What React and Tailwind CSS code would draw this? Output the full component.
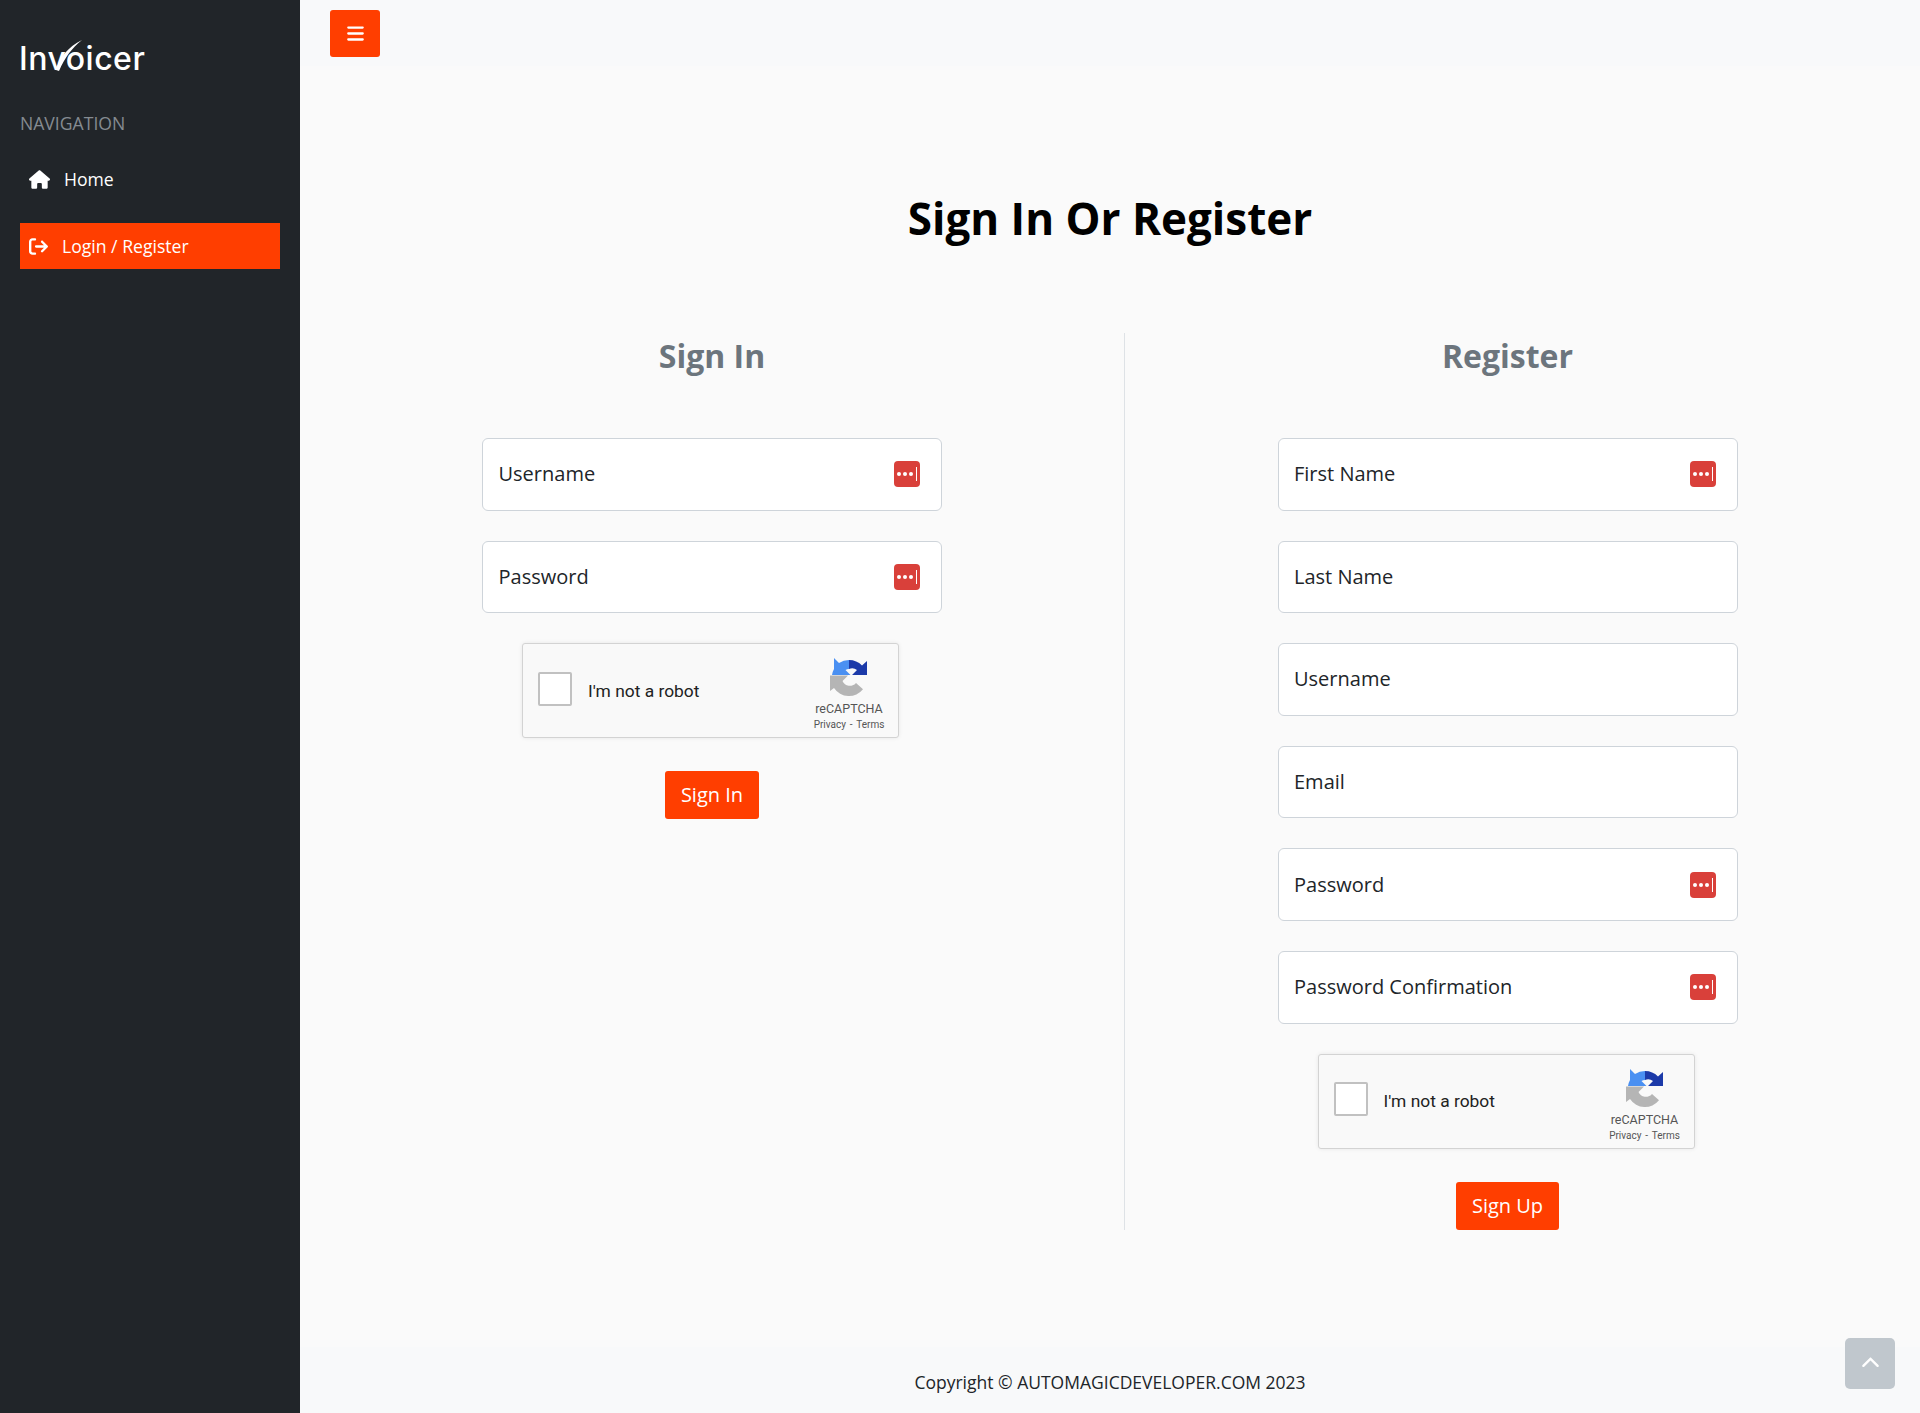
import { FaHouse, FaArrowRightFromBracket, FaBars, FaChevronUp } from "react-icons/fa6";

const openSans = { fontFamily: '"Open Sans", sans-serif' };

const PasswordBadge = () => (
  <span className="flex h-[26px] w-[26px] items-center justify-center gap-[2px] rounded-[4px] bg-[#d9403a]">
    <span className="h-[4px] w-[4px] rounded-full bg-white"></span>
    <span className="h-[4px] w-[4px] rounded-full bg-white"></span>
    <span className="h-[4px] w-[4px] rounded-full bg-white"></span>
    <span className="ml-[1px] h-[14px] w-[1px] bg-white"></span>
  </span>
);

const Field = ({ label, badge }) => (
  <div className="mb-[30px] flex h-[72.6px] w-[460px] items-center justify-between rounded-[6px] border border-[#ced4da] bg-white pl-[15.5px] pr-[21px] text-[20px] text-[#212529]">
    <span>{label}</span>
    {badge && <PasswordBadge />}
  </div>
);

const CaptchaLogo = () => (
  <svg width="38" height="40" viewBox="0 0 38 40">
    <path d="M19 3 A18 18 0 0 1 32 8.5 L37 4 L37 18 L22 18 L27 13 A8 8 0 0 0 19 12 Z" fill="#1c3aa9" />
    <path d="M4 1 L9 6 A18 18 0 0 1 19 3 L19 12 A8 8 0 0 0 15.5 13 L20.5 18 L2 18 A18 18 0 0 1 4 12 Z" fill="#4a90f2" />
    <path d="M0 18.5 L18 18.5 L12.5 24 A8 8 0 0 0 26 26 L33 32.3 A18 18 0 0 1 4 31 L0 34 Z" fill="#b5b5b5" />
  </svg>
);

const Captcha = () => (
  <div
    className="-ml-[3px] flex h-[95px] w-[377px] items-center rounded-[3px] border border-[#d3d3d3] bg-[#f9f9f9] pl-[15px] pr-[13px] shadow-[0_0_4px_rgba(0,0,0,0.08)]"
    style={{ fontFamily: "Roboto, sans-serif" }}
  >
    <span className="mb-[4px] h-[34px] w-[34px] rounded-[2px] border-2 border-[#c1c1c1] bg-white"></span>
    <span className="ml-[16px] flex-1 text-[17.4px] text-[#222]">I'm not a robot</span>
    <div className="flex w-[72px] flex-col items-center self-start pt-[13px]">
      <CaptchaLogo />
      <span className="mt-[4px] text-[12.5px] leading-[16px] text-[#555]">reCAPTCHA</span>
      <span className="whitespace-nowrap text-[10px] leading-[15px] text-[#555] [word-spacing:1.4px]">Privacy - Terms</span>
    </div>
  </div>
);

const SubmitButton = ({ children }) => (
  <button className="mt-[33px] h-[48px] rounded-[3px] bg-[#ff3e00] px-[16px] text-[20px] text-white">
    {children}
  </button>
);

const App = () => {
  return (
    <div className="flex min-h-[1413px] bg-[#fafafa]" style={openSans}>
      <aside className="w-[300px] shrink-0 bg-[#212529] px-[20px] text-white">
        <div className="relative -ml-px mt-[37px] h-[40px] text-[32px] font-medium leading-[44px] tracking-[0.5px]" style={{ fontFamily: "Inter, sans-serif" }}>
          Invoicer
          {/* swoosh off the v in the logo */}
          <svg className="absolute left-0 top-0" width="70" height="40" viewBox="0 0 70 40">
            <path d="M37 33 C41 20 49 10 63 3 C53 11 46 20 40 34 Z" fill="#fff" />
          </svg>
        </div>
        <div className="mt-[34px] text-[17.6px] leading-[24px] text-[#858b91]">NAVIGATION</div>
        <a className="mt-[21px] flex h-[46px] items-center pl-[9px] text-[17.6px]">
          <FaHouse className="mr-[14px] text-[21px]" />
          Home
        </a>
        <a className="mt-[21px] flex h-[46px] items-center bg-[#ff3e00] pl-[9px] text-[17.6px]">
          <FaArrowRightFromBracket className="mr-[14px] text-[19px]" />
          Login / Register
        </a>
      </aside>
      <main className="flex min-w-0 flex-1 flex-col">
        <div className="h-[66px] bg-[#f8f9fa] pl-[30px] pt-[10px]">
          <button className="flex h-[47px] w-[50px] items-center justify-center rounded-[3px] bg-[#ff3e00] text-[19px] text-white">
            <FaBars />
          </button>
        </div>
        <h1 className="mt-[118px] text-center text-[44px] font-bold leading-[68px] text-black">Sign In Or Register</h1>
        <div className="mt-[81px] flex">
          <section className="flex w-[825px] flex-col items-center border-r border-[#dee2e6]">
            <h2 className="mb-[59px] text-[32px] font-bold leading-[46px] text-[#6c757d]">Sign In</h2>
            <Field label="Username" badge />
            <Field label="Password" badge />
            <Captcha />
            <SubmitButton>Sign In</SubmitButton>
          </section>
          <section className="flex w-[765px] flex-col items-center">
            <h2 className="mb-[59px] text-[32px] font-bold leading-[46px] text-[#6c757d]">Register</h2>
            <Field label="First Name" badge />
            <Field label="Last Name" />
            <Field label="Username" />
            <Field label="Email" />
            <Field label="Password" badge />
            <Field label="Password Confirmation" badge />
            <Captcha />
            <SubmitButton>Sign Up</SubmitButton>
          </section>
        </div>
        <footer className="mt-auto flex h-[66px] items-center justify-center bg-[#f8f9fa] pt-[4px] text-[17.5px] text-[#212529]">
          Copyright © AUTOMAGICDEVELOPER.COM 2023
        </footer>
      </main>
      <button className="fixed bottom-[24px] right-[25px] flex h-[51px] w-[50px] items-center justify-center rounded-[5px] bg-[#c0c7cd] text-[19px] text-white">
        <FaChevronUp />
      </button>
    </div>
  );
};

export default App;
